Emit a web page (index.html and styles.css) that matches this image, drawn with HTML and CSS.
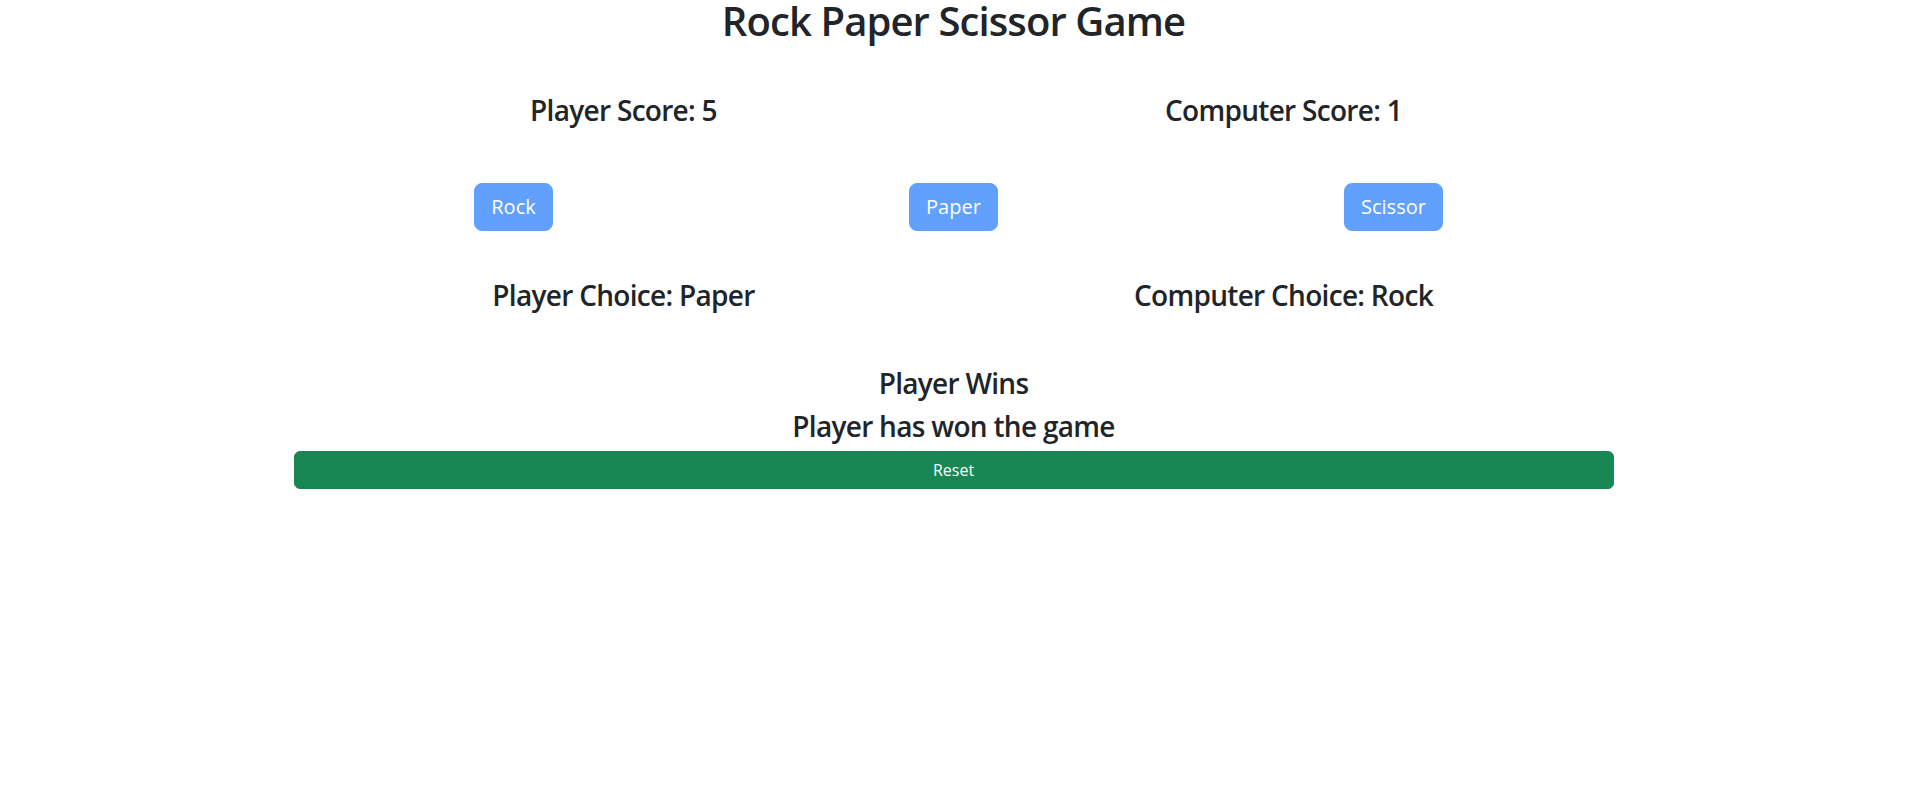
FILE: index.html
```html
<!DOCTYPE html>
<html lang="en">
<head>
<meta charset="utf-8">
<title>Rock Paper Scissor Game</title>
<link rel="stylesheet" href="styles.css">
</head>
<body>
<div class="page">
  <h1 class="title">Rock Paper Scissor Game</h1>
  <div class="container">
    <div class="row scores">
      <h3 class="col-half">Player Score: 5</h3>
      <h3 class="col-half">Computer Score: 1</h3>
    </div>
    <div class="row choices">
      <div class="col-third"><button class="btn btn-lg btn-primary" disabled>Rock</button></div>
      <div class="col-third"><button class="btn btn-lg btn-primary" disabled>Paper</button></div>
      <div class="col-third"><button class="btn btn-lg btn-primary" disabled>Scissor</button></div>
    </div>
    <div class="row picks">
      <h3 class="col-half">Player Choice: Paper</h3>
      <h3 class="col-half">Computer Choice: Rock</h3>
    </div>
    <div class="result">
      <h3 class="result-line">Player Wins</h3>
      <h3 class="result-line">Player has won the game</h3>
    </div>
    <button class="btn btn-success btn-block">Reset</button>
  </div>
</div>
</body>
</html>
```

FILE: styles.css
```css
* { box-sizing: border-box; }

html, body {
  margin: 0;
  padding: 0;
  background: #fff;
}

body {
  font-family: "Open Sans", "Noto Sans", sans-serif;
  color: #212529;
}

.page {
  max-width: 1907px;
}

.title {
  margin: 0;
  text-align: center;
  font-size: 40px;
  font-weight: 600;
  line-height: 42px;
  letter-spacing: -0.9px;
}

.container {
  width: 1320px;
  margin: 0 auto;
}

.row {
  display: flex;
}

.col-half {
  flex: 0 0 50%;
  text-align: center;
}

.col-third {
  flex: 0 0 33.3333%;
  text-align: center;
}

h3 {
  margin: 0;
  font-size: 28px;
  font-weight: 600;
  line-height: 33.6px;
  letter-spacing: -0.7px;
}

.scores {
  margin-top: 52px;
}

.choices {
  margin-top: 55px;
}

.picks {
  margin-top: 48px;
}

.result {
  margin-top: 55px;
  display: flex;
  flex-direction: column;
  gap: 9px;
  text-align: center;
}

.btn {
  font-family: inherit;
  display: inline-block;
  border: 1px solid transparent;
  color: #fff;
  font-weight: 400;
  cursor: pointer;
}

.btn-lg {
  font-size: 20px;
  line-height: 30px;
  padding: 8px 16px;
  border-radius: 8px;
}

.btn-primary {
  background: #0d6efd;
  border-color: #0d6efd;
}

.btn-primary:disabled {
  opacity: 0.65;
  color: #fff;
  cursor: default;
}

.btn-success {
  background: #198754;
  border-color: #198754;
  font-size: 16px;
  line-height: 24px;
  padding: 6px 12px;
  border-radius: 6px;
}

.btn-block {
  display: block;
  width: 100%;
  margin-top: 8px;
}
```
